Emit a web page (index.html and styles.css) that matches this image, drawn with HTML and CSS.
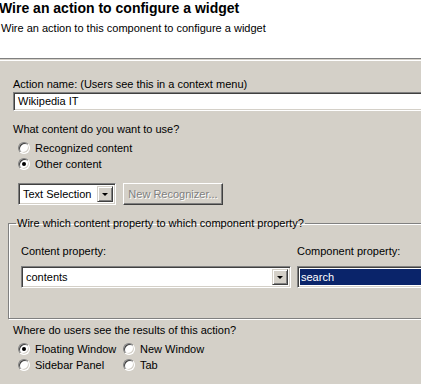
FILE: index.html
```html
<!DOCTYPE html>
<html>
<head>
<meta charset="utf-8">
<link rel="stylesheet" href="styles.css">
</head>
<body>
<div class="header">
  <div class="title">Wire an action to configure a widget</div>
  <div class="subtitle">Wire an action to this component to configure a widget</div>
</div>
<div class="sep"></div>
<div class="content">
  <div class="label lbl-name">Action name: (Users see this in a context menu)</div>
  <div class="textfield">Wikipedia IT</div>

  <div class="label lbl-what">What content do you want to use?</div>
  <div class="radios col">
    <div class="radio"><span class="dot"></span><span>Recognized content</span></div>
    <div class="radio"><span class="dot on"></span><span>Other content</span></div>
  </div>

  <div class="row-recog">
    <div class="combo combo-sel"><span class="ctext">Text Selection</span><span class="arrow"></span></div>
    <div class="button disabled">New Recognizer...</div>
  </div>

  <fieldset class="group">
    <legend>Wire which content property to which component property?</legend>
    <div class="props">
      <div class="prop prop-content">
        <div class="label">Content property:</div>
        <div class="combo combo-content"><span class="ctext">contents</span><span class="arrow"></span></div>
      </div>
      <div class="prop prop-comp">
        <div class="label">Component property:</div>
        <div class="list"><span class="sel">search</span></div>
      </div>
    </div>
  </fieldset>

  <div class="label lbl-where">Where do users see the results of this action?</div>
  <div class="radios grid">
    <div class="radio"><span class="dot on"></span><span>Floating Window</span></div>
    <div class="radio"><span class="dot"></span><span>New Window</span></div>
    <div class="radio"><span class="dot"></span><span>Sidebar Panel</span></div>
    <div class="radio"><span class="dot"></span><span>Tab</span></div>
  </div>
</div>
</body>
</html>
```
FILE: styles.css
```css
html, body {
  margin: 0;
  padding: 0;
  width: 421px;
  height: 384px;
  overflow: hidden;
  background: #d4d0c8;
  font-family: "Liberation Sans", Arial, sans-serif;
  font-size: 11px;
  color: #000;
}
.header {
  background: #fff;
  height: 58px;
  box-sizing: border-box;
  padding-top: 0;
}
.title {
  font-weight: bold;
  font-size: 14px;
  line-height: 17px;
  margin-left: -1px;
  white-space: nowrap;
}
.subtitle {
  margin-top: 5px;
  margin-left: 1px;
  line-height: 13px;
}
.sep {
  height: 1px;
  border-top: 1px solid #808080;
  border-bottom: 1px solid #fff;
  background: #d4d0c8;
}
.content {
  padding-left: 13px;
  padding-top: 17px;
}
.label {
  line-height: 13px;
  white-space: nowrap;
}
.textfield {
  margin-top: 1px;
  height: 15px;
  width: 420px;
  background: #fff;
  border: 1px solid;
  border-color: #808080 #fff #fff #808080;
  box-shadow: inset 1px 1px 0 #404040, inset -1px -1px 0 #d4d0c8;
  padding: 2px 0 0 4px;
  line-height: 13px;
}
.lbl-what {
  margin-top: 12px;
}
.radios {
  margin-left: 5px;
}
.radios.col {
  margin-top: 5px;
  display: flex;
  flex-direction: column;
  gap: 3px;
}
.radio {
  display: flex;
  align-items: center;
  gap: 5px;
  height: 13px;
  white-space: nowrap;
}
.dot {
  width: 10px;
  height: 10px;
  border-radius: 50%;
  background: #fff;
  border: 1px solid;
  border-color: #808080 #fff #fff #808080;
  box-shadow: inset 1px 1px 0 #404040, inset -1px -1px 0 #d4d0c8;
  position: relative;
  flex: none;
}
.dot.on::after {
  content: "";
  position: absolute;
  left: 3px;
  top: 3px;
  width: 4px;
  height: 4px;
  border-radius: 50%;
  background: #000;
}
.row-recog {
  margin-top: 13px;
  margin-left: 5px;
  display: flex;
  gap: 7px;
  height: 22px;
}
.combo {
  background: #fff;
  border: 1px solid;
  border-color: #808080 #fff #fff #808080;
  box-shadow: inset 1px 1px 0 #404040, inset -1px -1px 0 #d4d0c8;
  box-sizing: border-box;
  height: 22px;
  display: flex;
  align-items: center;
  justify-content: space-between;
  padding: 2px;
}
.ctext {
  padding-left: 2px;
  line-height: 13px;
}
.combo-sel {
  width: 98px;
}
.arrow {
  width: 16px;
  height: 16px;
  box-sizing: border-box;
  background: #d4d0c8;
  border: 1px solid;
  border-color: #d4d0c8 #404040 #404040 #d4d0c8;
  box-shadow: inset 1px 1px 0 #fff, inset -1px -1px 0 #808080;
  position: relative;
  flex: none;
}
.arrow::after {
  content: "";
  position: absolute;
  left: 4px;
  top: 6px;
  border-left: 3px solid transparent;
  border-right: 3px solid transparent;
  border-top: 3px solid #000;
}
.button {
  width: 100px;
  height: 22px;
  box-sizing: border-box;
  border: 1px solid;
  border-color: #fff #404040 #404040 #fff;
  box-shadow: inset -1px -1px 0 #808080;
  display: flex;
  align-items: center;
  justify-content: center;
}
.button.disabled {
  color: #808080;
  text-shadow: 1px 1px 0 #fff;
}
.group {
  margin: 12px 0 0 -5px;
  padding: 0 0 0 12px;
  width: 440px;
  height: 102px;
  box-sizing: border-box;
  border: 1px solid #808080;
  box-shadow: 1px 1px 0 #fff, inset 1px 1px 0 #fff;
}
.group legend {
  padding: 0 1px;
  margin-left: -5px;
  line-height: 13px;
  white-space: nowrap;
}
.props {
  display: flex;
  gap: 6px;
  margin-top: 15px;
}
.prop {
  display: flex;
  flex-direction: column;
  gap: 8px;
}
.combo-content {
  width: 270px;
}
.list {
  width: 140px;
  height: 22px;
  box-sizing: border-box;
  background: #fff;
  border: 1px solid;
  border-color: #808080 #fff #fff #808080;
  box-shadow: inset 1px 1px 0 #404040, inset -1px -1px 0 #d4d0c8;
  padding: 2px;
}
.list .sel {
  display: block;
  background: #0a246a;
  color: #fff;
  height: 16px;
  line-height: 16px;
  padding-left: 1px;
}
.lbl-where {
  margin-top: 5px;
}
.radios.grid {
  margin-top: 5px;
  display: grid;
  grid-template-columns: 105px auto;
  row-gap: 3px;
}
```
